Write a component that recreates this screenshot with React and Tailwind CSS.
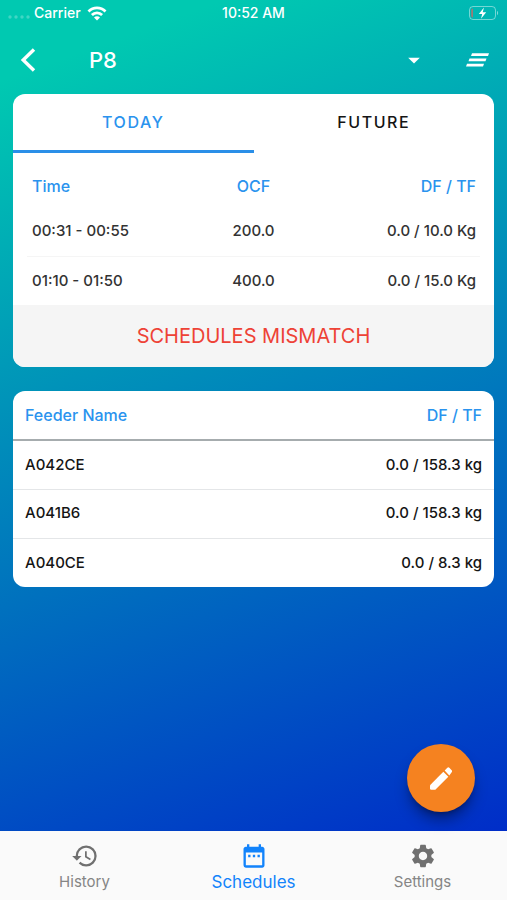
import { useState } from 'react';
import { MdArrowDropDown, MdDateRange, MdHistory, MdSettings } from 'react-icons/md';

const schedules = {
  today: [
    { time: '00:31 - 00:55', ocf: '200.0', feed: '0.0 / 10.0 Kg' },
    { time: '01:10 - 01:50', ocf: '400.0', feed: '0.0 / 15.0 Kg' },
  ],
  future: [],
};

const feeders = [
  { name: 'A042CE', feed: '0.0 / 158.3 kg' },
  { name: 'A041B6', feed: '0.0 / 158.3 kg' },
  { name: 'A040CE', feed: '0.0 / 8.3 kg' },
];

function StatusBar() {
  return (
    <div className="grid h-[26px] grid-cols-3 items-center px-2 text-sm font-medium">
      <div className="flex items-center gap-1">
        <svg viewBox="0 0 22 4" className="mt-2 h-1 w-[22px]" fill="currentColor" opacity="0.25" aria-hidden>
          <circle cx="2" cy="2" r="1.7" />
          <circle cx="8" cy="2" r="1.7" />
          <circle cx="14" cy="2" r="1.7" />
          <circle cx="20" cy="2" r="1.7" />
        </svg>
        <span>Carrier</span>
        <svg viewBox="0 0 20 15" className="ml-0.5 h-[15px] w-5" fill="none" stroke="currentColor" strokeWidth="2.8" aria-hidden>
          <path d="M1.5 5.400a12 12 0 0 1 17 0" />
          <path d="M4.9 9a7.200 7.200 0 0 1 10.200 0" />
          <path d="M10 14.600 7 11.600a4.200 4.200 0 0 1 6 0z" fill="currentColor" stroke="none" />
        </svg>
      </div>
      <span className="text-center">10:52 AM</span>
      <svg viewBox="0 0 30 14" className="h-3.5 w-[30px] justify-self-end" fill="none" aria-hidden>
        <rect x="0.5" y="0.5" width="26" height="13" rx="3.5" stroke="#fff" strokeOpacity="0.45" />
        <path d="M28 4.800c1.500.700 1.500 3.700 0 4.400z" fill="#fff" fillOpacity="0.5" />
        <path d="M4 2.500v9c-1.300 0-1.800-.700-1.800-2v-5c0-1.300.500-2 1.800-2z" fill="#e0605a" fillOpacity="0.7" />
        <path d="M15 1.500 9.800 8h3.400l-1.200 4.700L17.200 6.200h-3.500z" fill="#fff" />
      </svg>
    </div>
  );
}

function Header() {
  return (
    <header className="flex h-[68px] items-center pr-[18px] pl-5">
      <button type="button" aria-label="Back" className="w-[69px]">
        <svg viewBox="0 0 16 24" className="h-6 w-4" fill="none" stroke="currentColor" strokeWidth="3.4" aria-hidden>
          <path d="M14 1.500 3.200 12 14 22.500" />
        </svg>
      </button>
      <h1 className="flex-1 text-[22px] font-medium">P8</h1>
      <button type="button" aria-label="Select pond" className="mr-[38px]">
        <MdArrowDropDown className="size-7" />
      </button>
      <button type="button" aria-label="Menu">
        <svg viewBox="0 0 23 14" className="h-3.5 w-[23px]" fill="currentColor" aria-hidden>
          <path d="M6 .300h17l-1 2.700H5z" />
          <path d="M3.500 5.500h17l-1 2.700h-17z" />
          <path d="M1 10.700h17l-1 2.700H0z" />
        </svg>
      </button>
    </header>
  );
}

function Tab({ label, active, onClick }) {
  return (
    <button
      type="button"
      role="tab"
      aria-selected={active}
      onClick={onClick}
      className={`h-[59px] flex-1 border-b-3 text-base font-medium tracking-widest ${
        active ? 'border-[#2a8fe8] text-[#2a93ee]' : 'border-transparent text-[#151515]'
      }`}
    >
      {label}
    </button>
  );
}

function ScheduleCard() {
  const [tab, setTab] = useState('today');

  return (
    <section className="overflow-hidden rounded-xl bg-white">
      <div role="tablist" className="flex">
        <Tab label="TODAY" active={tab === 'today'} onClick={() => setTab('today')} />
        <Tab label="FUTURE" active={tab === 'future'} onClick={() => setTab('future')} />
      </div>
      <div className="px-3.5">
        <table className="w-full table-fixed text-[15px] font-medium text-[#333]">
          <thead>
            <tr className="h-[54px] text-base text-[#2a93ee]">
              <th className="pt-3 pl-[5px] text-left font-medium">Time</th>
              <th className="pt-3 text-center font-medium">OCF</th>
              <th className="pt-3 pr-1 text-right font-medium">DF / TF</th>
            </tr>
          </thead>
          <tbody>
            {schedules[tab].map((row) => (
              <tr key={row.time} className="h-[49px] border-b border-[#f5f5f5] last:border-0">
                <td className="pl-[5px]">{row.time}</td>
                <td className="text-center">{row.ocf}</td>
                <td className="pr-1 text-right">{row.feed}</td>
              </tr>
            ))}
          </tbody>
        </table>
      </div>
      <p className="bg-[#f5f5f5] py-4 text-center text-xl leading-[30px] text-[#ee4236]">SCHEDULES MISMATCH</p>
    </section>
  );
}

function FeederCard() {
  return (
    <section className="overflow-hidden rounded-xl bg-white">
      <table className="w-full text-[15px] font-medium text-[#151515]">
        <thead>
          <tr className="h-[49px] border-b-2 border-[#a6acae] text-base text-[#2a93ee]">
            <th className="pl-3 text-left font-medium">Feeder Name</th>
            <th className="pr-3 text-right font-medium">DF / TF</th>
          </tr>
        </thead>
        <tbody>
          {feeders.map((feeder) => (
            <tr key={feeder.name} className="h-[49px] border-b border-[#e4e6e8] last:border-0">
              <td className="pl-3">{feeder.name}</td>
              <td className="pr-3 text-right">{feeder.feed}</td>
            </tr>
          ))}
        </tbody>
      </table>
    </section>
  );
}

function BottomNav() {
  return (
    <nav className="grid h-[69px] grid-cols-3 bg-[#fafafa] text-[15px] text-[#858585]">
      <a href="#history" className="flex flex-col items-center pt-[11px]">
        <MdHistory className="size-7 text-[#707070]" aria-hidden />
        <span className="leading-6">History</span>
      </a>
      <a href="#schedules" aria-current="page" className="flex flex-col items-center pt-[11px] text-[17px] text-[#1283fb]">
        <MdDateRange className="size-7" aria-hidden />
        <span className="leading-6">Schedules</span>
      </a>
      <a href="#settings" className="flex flex-col items-center pt-[11px]">
        <MdSettings className="size-7 text-[#707070]" aria-hidden />
        <span className="leading-6">Settings</span>
      </a>
    </nav>
  );
}

export default function App() {
  return (
    <div className="flex min-h-screen flex-col font-['Inter',sans-serif]">
      <main className="relative flex-1 bg-[linear-gradient(160deg,#00c9b1_8%,#002dc8_100%)] text-white">
        <StatusBar />
        <Header />
        <div className="flex flex-col gap-6 px-[13px]">
          <ScheduleCard />
          <FeederCard />
        </div>
        <button
          type="button"
          aria-label="Edit schedules"
          className="absolute right-8 bottom-[19px] flex size-[68px] items-center justify-center rounded-full bg-[#f58220] shadow-lg shadow-black/40"
        >
          <svg viewBox="0 0 66 68" className="h-[23px] w-[22px]" fill="currentColor" aria-hidden>
            <path d="M0 54 40 14 55 29 16 68H4q-4 0-4-4z" />
            <path d="M44 10 52 2q3-3 6 0l7 7q3 3 0 6l-7 10z" />
          </svg>
        </button>
      </main>
      <BottomNav />
    </div>
  );
}
